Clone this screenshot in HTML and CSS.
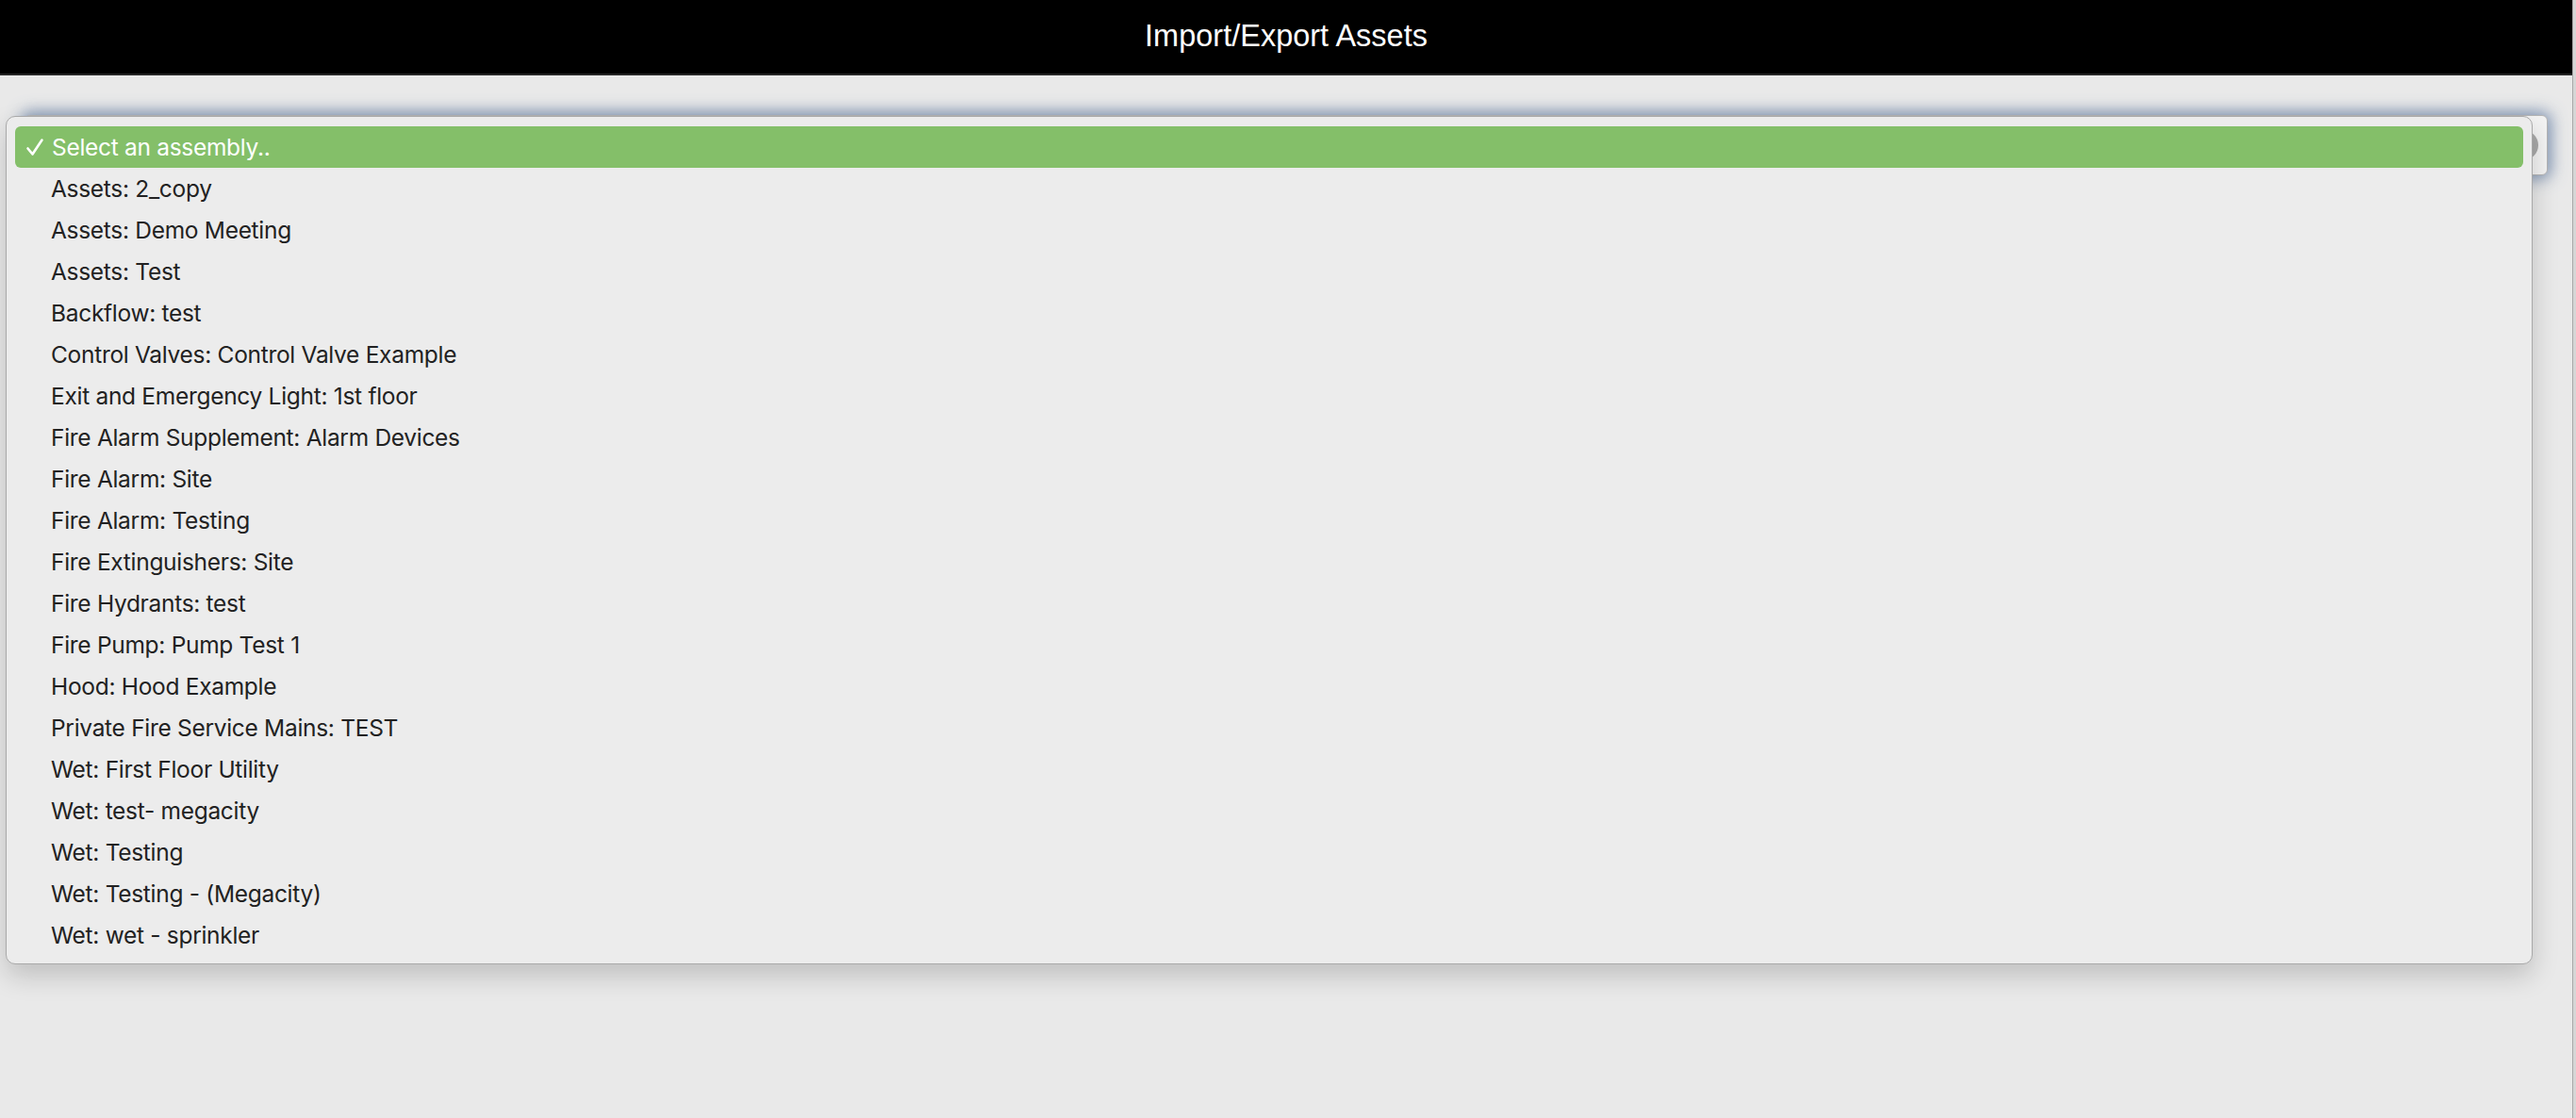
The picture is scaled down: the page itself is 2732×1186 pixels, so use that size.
FILE: index.html
```html
<!DOCTYPE html>
<html lang="en">
<head>
    <meta charset="UTF-8">
    <meta name="viewport" content="width=device-width, initial-scale=1.0">
    <title>Import/Export Assets</title>
    <link rel="stylesheet" href="styles.css">
</head>
<body>
    <div class="page">
        <!-- Title bar -->
        <div class="title-bar">Import/Export Assets</div>

        <div class="content">
            <!-- Assembly picker, opened -->
            <div class="picker">
                <div class="select-box">
                    <span class="select-knob"></span>
                </div>

                <ul class="menu">
                    <li class="menu-item selected">
                        <svg class="check" width="20" height="20" viewBox="0 0 20 20">
                            <path d="M2.5 11.5 L7.5 17.5 L17.5 2.5" fill="none" stroke="#fff" stroke-width="2.6" stroke-linecap="round" stroke-linejoin="round"/>
                        </svg>
                        Select an assembly..
                    </li>
                    <li class="menu-item">Assets: 2_copy</li>
                    <li class="menu-item">Assets: Demo Meeting</li>
                    <li class="menu-item">Assets: Test</li>
                    <li class="menu-item">Backflow: test</li>
                    <li class="menu-item">Control Valves: Control Valve Example</li>
                    <li class="menu-item">Exit and Emergency Light: 1st floor</li>
                    <li class="menu-item">Fire Alarm Supplement: Alarm Devices</li>
                    <li class="menu-item">Fire Alarm: Site</li>
                    <li class="menu-item">Fire Alarm: Testing</li>
                    <li class="menu-item">Fire Extinguishers: Site</li>
                    <li class="menu-item">Fire Hydrants: test</li>
                    <li class="menu-item">Fire Pump: Pump Test 1</li>
                    <li class="menu-item">Hood: Hood Example</li>
                    <li class="menu-item">Private Fire Service Mains: TEST</li>
                    <li class="menu-item">Wet: First Floor Utility</li>
                    <li class="menu-item">Wet: test- megacity</li>
                    <li class="menu-item">Wet: Testing</li>
                    <li class="menu-item">Wet: Testing - (Megacity)</li>
                    <li class="menu-item">Wet: wet - sprinkler</li>
                </ul>
            </div>
        </div>
    </div>
    <div class="edge"></div>
</body>
</html>
```

FILE: styles.css
```css
/* Basic Styles */
body {
    font-family: Inter, "Liberation Sans", Arial, sans-serif;
    background-color: #e9e9e9;
    display: flex;
    min-height: 100vh;
    margin: 0;
    padding: 0;
}

.page {
    flex: 1;
    display: flex;
    flex-direction: column;
}

/* Right edge strip */
.edge {
    width: 3px;
    background-color: #d6d6d6;
    border-left: 1px solid #a8a8a8;
}

/* Title Bar */
.title-bar {
    height: 78px;
    background-color: #000;
    border-bottom: 2px solid #262626;
    color: #fff;
    font-family: "Liberation Sans", Arial, sans-serif;
    font-size: 32.5px;
    line-height: 76px;
    text-align: center;
}

.content {
    padding: 42px 26px 0 26px;
}

/* Select and its open menu */
.picker {
    position: relative;
}

.select-box {
    height: 62px;
    background-color: #f3f3f3;
    border: 1px solid #b4b4b4;
    border-radius: 6px;
    box-shadow: 0 0 16px 4px rgba(105, 130, 168, 0.8);
    display: flex;
    justify-content: flex-end;
    align-items: center;
    padding-right: 9px;
}

.select-knob {
    width: 32px;
    height: 32px;
    border-radius: 50%;
    background-color: #a9a9a9;
}

.menu {
    position: absolute;
    top: 1px;
    left: -20px;
    right: 16px;
    margin: 0;
    padding: 10px 9px 8px 9px;
    list-style: none;
    background-color: #ececec;
    border: 1px solid #a9a9a9;
    border-radius: 10px;
    box-shadow: 0 12px 28px rgba(0, 0, 0, 0.18);
}

.menu-item {
    height: 44px;
    display: flex;
    align-items: center;
    padding-left: 38px;
    font-size: 24.5px;
    letter-spacing: -0.3px;
    color: #222;
    border-radius: 6px;
}

.menu-item.selected {
    background-color: #84bf69;
    color: #fff;
    padding-left: 11px;
}

.check {
    margin-right: 8px;
}
```
